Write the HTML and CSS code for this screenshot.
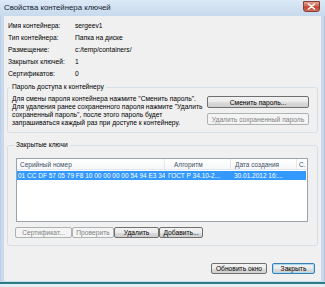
FILE: index.html
```html
<!DOCTYPE html>
<html lang="ru">
<head>
<meta charset="utf-8">
<title>Свойства контейнера ключей</title>
<link rel="stylesheet" href="styles.css">
</head>
<body>
<div class="window">
  <div class="titlebar">
    <span class="title">Свойства контейнера ключей</span>
    <span class="close"><svg width="9" height="7" viewBox="0 0 9 7"><path d="M1.5 1 L7.5 6 M7.5 1 L1.5 6" stroke="#fff" stroke-width="1.6" stroke-linecap="round"/></svg></span>
  </div>
  <div class="client">
    <div class="info">
      <span>Имя контейнера:</span><span>sergeev1</span>
      <span>Тип контейнера:</span><span>Папка на диске</span>
      <span>Размещение:</span><span>c:/temp/containers/</span>
      <span>Закрытых ключей:</span><span>1</span>
      <span>Сертификатов:</span><span>0</span>
    </div>
    <fieldset class="group pw">
      <legend>Пароль доступа к контейнеру</legend>
      <div class="pw-row">
        <p class="pw-text">Для смены пароля контейнера нажмите "Сменить пароль".<br>Для удаления ранее сохраненного пароля нажмите "Удалить<br>сохраненный пароль", после этого пароль будет<br>запрашиваться каждый раз при доступе к контейнеру.</p>
        <div class="pw-buttons">
          <button class="btn">Сменить пароль...</button>
          <button class="btn disabled">Удалить сохраненный пароль</button>
        </div>
      </div>
    </fieldset>
    <fieldset class="group keys">
      <legend>Закрытые ключи</legend>
      <div class="list">
        <div class="lrow head">
          <span class="c1">Серийный номер</span>
          <span class="c2">Алгоритм</span>
          <span class="c3">Дата создания</span>
          <span class="c4">С.</span>
        </div>
        <div class="lrow item selected">
          <span class="c1">01 CC DF 57 05 79 F8 10 00 00 00 00 54 94 E3 34</span>
          <span class="c2">ГОСТ Р 34.10-2...</span>
          <span class="c3">30.01.2012 16:...</span>
          <span class="c4"></span>
        </div>
      </div>
      <div class="key-buttons">
        <button class="btn disabled w-cert">Сертификат...</button>
        <button class="btn disabled w-check">Проверить</button>
        <button class="btn w-del">Удалить</button>
        <button class="btn w-add">Добавить...</button>
      </div>
    </fieldset>
    <div class="footer">
      <button class="btn w-refresh">Обновить окно</button>
      <button class="btn default w-close">Закрыть</button>
    </div>
  </div>
  <div class="bottom-frame"></div>
</div>
</body>
</html>
```

FILE: styles.css
```css
* { box-sizing: border-box; }
html, body { margin: 0; padding: 0; }
body {
  width: 325px;
  height: 287px;
  overflow: hidden;
  background: #dfe9f3;
  font-family: "Liberation Sans", Arial, sans-serif;
  font-size: 6.7px;
  color: #000;
}
.window {
  width: 325px;
  height: 287px;
  display: flex;
  flex-direction: column;
  background: linear-gradient(to right, #b9cde4 0, #cddcee 2px, #c6d8ec 4px, #c6d8ec 321px, #cddcee 323px, #a9bfd8 325px);
}
.titlebar {
  height: 16px;
  flex: none;
  display: flex;
  align-items: center;
  justify-content: space-between;
  padding: 0 5px 0 4px;
  background: linear-gradient(#dce9f6, #c7d9ee);
}
.title {
  font-size: 7.8px;
  color: #14202e;
  margin-top: -1px;
}
.close {
  width: 17px;
  height: 11px;
  margin-top: -3px;
  display: flex;
  align-items: center;
  justify-content: center;
  border: 1px solid #8a3b33;
  border-radius: 0 0 3px 3px;
  background: linear-gradient(#e3a293, #cf6652 45%, #c2432f 55%, #d2705c);
}
.client {
  height: 265px;
  flex: none;
  margin: 0 4px;
  background: #f0f0f0;
  display: flex;
  flex-direction: column;
}
.info {
  display: grid;
  grid-template-columns: 67px auto;
  grid-auto-rows: 12px;
  align-items: center;
  padding: 3px 0 0 4px;
}
.group {
  margin: 0 3px;
  border: 1px solid #d5dfe5;
  border-radius: 3px;
  min-width: 0;
}
.group legend {
  font-size: 6.7px;
  line-height: 8px;
  padding: 0 2px;
  margin-left: -2px;
}
.pw {
  margin-top: 4px;
  padding: 4px 8px 5px 4px;
}
.pw-row {
  display: flex;
  justify-content: space-between;
}
.pw-text {
  margin: 0;
  line-height: 8px;
  white-space: nowrap;
}
.pw-buttons {
  display: flex;
  flex-direction: column;
  gap: 5px;
  margin-top: 1px;
  width: 102px;
}
.pw-buttons .btn { height: 12px; }
.keys {
  margin-top: 8px;
  padding: 9px 9px 7px 8px;
}
.list {
  height: 64px;
  border: 1px solid #9aa2ab;
  background: #fff;
  font-size: 6.5px;
}
.lrow {
  display: flex;
  white-space: nowrap;
}
.lrow span { overflow: hidden; }
.c1 { width: 148px; }
.c2 { width: 66px; }
.c3 { width: 66px; }
.c4 { flex: 1; }
.head {
  height: 11px;
  align-items: center;
  color: #3d4f66;
  background: linear-gradient(#ffffff, #f6f7f9);
  border-bottom: 1px solid #e3e6ea;
}
.head span { border-right: 1px solid #e5e7ea; height: 100%; display: flex; align-items: center; }
.head .c4 { border-right: 0; }
.head .c1 { padding-left: 3px; }
.head .c2 { padding-left: 9px; }
.head .c3 { padding-left: 4px; }
.head .c4 { padding-left: 2px; }
.item {
  height: 9px;
  margin-top: 1px;
  margin-right: 1px;
  align-items: center;
}
.item.selected { background: #3399ff; color: #fff; }
.item .c1 { padding-left: 1px; }
.item .c2 { padding-left: 3px; }
.item .c3 { padding-left: 3px; }
.key-buttons {
  display: flex;
  margin-top: 5px;
  margin-left: -1px;
}
.key-buttons .btn { height: 11px; }
.w-cert { width: 57px; }
.w-check { width: 42px; margin-left: 5px; }
.w-del { width: 45px; margin-left: 6px; }
.w-add { width: 44px; margin-left: 5px; }
.footer {
  margin-top: auto;
  display: flex;
  justify-content: flex-end;
  gap: 5px;
  padding: 0 6px 7px 0;
}
.footer .btn { height: 11px; }
.w-refresh { width: 56px; }
.w-close { width: 43px; }
.btn {
  font-family: "Liberation Sans", Arial, sans-serif;
  font-size: 6.7px;
  color: #000;
  padding: 0;
  margin: 0;
  display: flex;
  align-items: center;
  justify-content: center;
  white-space: nowrap;
  border: 1px solid #707070;
  border-radius: 2px;
  background: linear-gradient(#f2f2f2 0%, #ebebeb 50%, #dddddd 50%, #cfcfcf 100%);
}
.btn.disabled {
  border-color: #adb2b5;
  background: #f4f4f4;
  color: #838383;
}
.btn.default {
  border-color: #3c7fb1;
  box-shadow: inset 0 0 0 1px #a7d9f5;
}
.bottom-frame {
  flex: 1;
  background: linear-gradient(#c6d8ec 0, #c6d8ec 1px, #2c7d83 1px, #2c7d83 3px, #e4ecf4 3px);
}
```
